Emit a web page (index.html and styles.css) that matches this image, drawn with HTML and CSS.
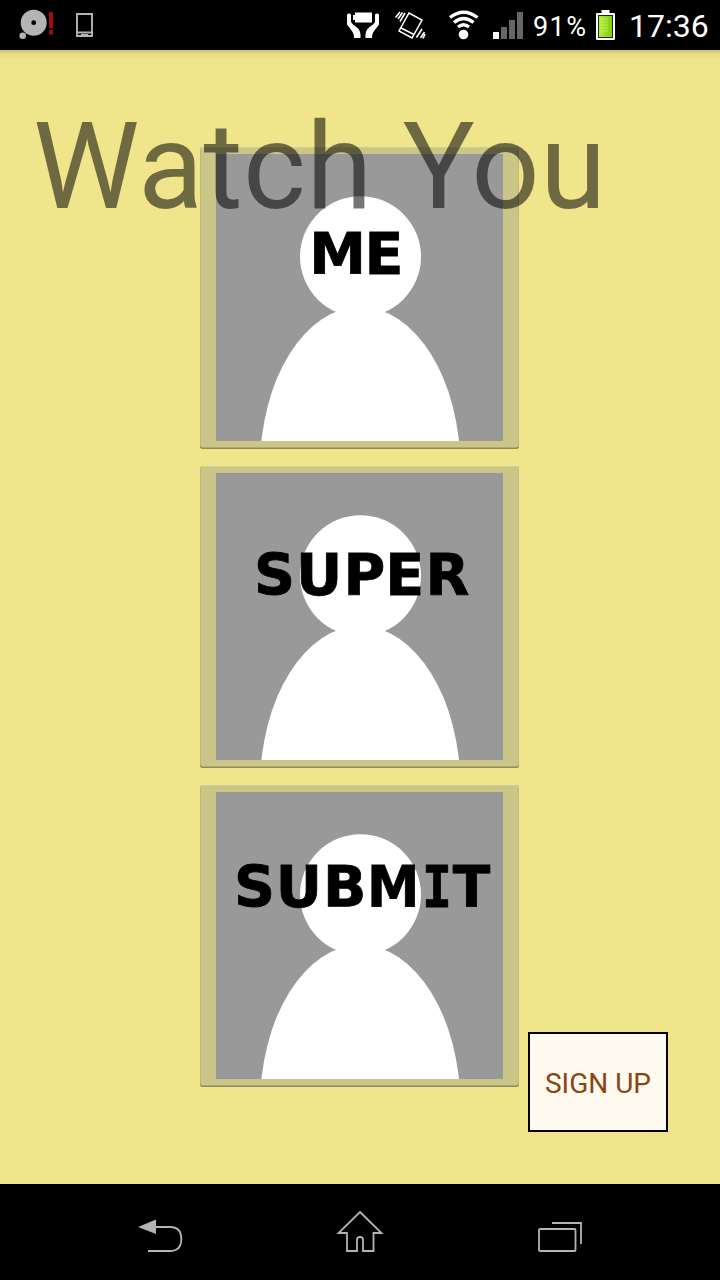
FILE: index.html
```html
<!DOCTYPE html>
<html lang="en">
<head>
<meta charset="utf-8">
<title>Watch You</title>
<link rel="stylesheet" href="styles.css">
</head>
<body>
<header class="status">
  <svg class="status-left" width="100" height="50" viewBox="0 0 100 50">
    <circle cx="33.7" cy="22.7" r="13" fill="#b4b4b4"/>
    <circle cx="33.7" cy="22.7" r="2.4" fill="#000"/>
    <circle cx="22.7" cy="35.8" r="3.3" fill="#b4b4b4"/>
    <path d="M49 12h4v16h-4zM49 30h4v4.500h-4z" fill="#a80a0a"/>
    <path d="M77 14h15v22H77zM77 32.5h15" fill="none" stroke="#b4b4b4" stroke-width="1.9"/>
    <path d="M81 34.5h7" stroke="#b4b4b4" stroke-width="1"/>
  </svg>
  <svg class="status-right" width="184" height="50" viewBox="344 0 184 50">
    <path d="M355 12.500h17v10h-17v-2.500h-2v-5h2z" fill="#fff"/>
    <path d="M347 14.500Q349 12.500 351 14.500V22Q352 24 357 27.500Q361 30.500 360.500 38H354Q354 33 351.500 30.500L347 24.500zM379 14.500Q377 12.500 375 14.500V22Q374 24 369 27.500Q365 30.500 365.500 38H372Q372 33 374.500 30.500L379 24.500z" fill="#fff"/>
    <g fill="none" stroke="#fff" stroke-width="1.500">
      <path d="M409 13L422 20L412 38L399 31zM401 28L414 34.500"/>
      <path d="M402.500 12.500L398 19M400 12L395.500 17.500M405 13L400 21.500M424.500 32L420.500 38M422 29L416.500 37.500M425 34L423 38.500" stroke-width="1.600"/>
    </g>
    <circle cx="463.500" cy="34.500" r="4.800" fill="#fff"/>
    <path d="M450 17.500Q463.500 7 477.500 17.500M454 22.500Q463.500 14.500 473.500 22.500M458 27Q463.500 22.500 469 27" fill="none" stroke="#fff" stroke-width="3.300"/>
    <path d="M493 32h6v7h-6z" fill="#fff"/>
    <path d="M501 27h6v12h-6zM509 20h6v19h-6zM517 12h6v27h-6z" fill="#666"/>
  </svg>
  <span class="percent">91%</span>
  <svg class="battery" width="19" height="31" viewBox="0 0 19 31">
    <defs><linearGradient id="charge" x2="1"><stop offset="0" stop-color="#b9f03d"/><stop offset="1" stop-color="#7cc90b"/></linearGradient></defs>
    <path d="M5.500 0h8v3h4.500q1 0 1 1v25q0 1-1 1H1q-1 0-1-1V4q0-1 1-1h4.500z" fill="#fff"/>
    <rect x="2.500" y="5.500" width="14" height="22" fill="url(#charge)" stroke="#1c2800" stroke-width="1"/>
    <path d="M4 9h8M4 12h8M4 15h8M4 18h8M4 21h8" stroke="#cdf768" stroke-width=".7"/>
  </svg>
  <time class="clock">17:36</time>
</header>

<main class="screen">
  <h1 class="title"><span class="wide">W</span>atch You</h1>
  <svg width="0" height="0" class="defs">
    <symbol id="person" viewBox="0 0 287 287">
      <rect width="287" height="287" fill="#999"/>
      <circle cx="144.500" cy="102.700" r="60.500" fill="#fff"/>
      <ellipse cx="144.200" cy="314" rx="100.200" ry="161" fill="#fff"/>
    </symbol>
  </svg>
  <div class="cards">
    <button class="card">
      <svg class="picture" viewBox="0 0 287 287"><use href="#person"/>
        <text y="120" x="93.300 148.500">ME</text>
      </svg>
    </button>
    <button class="card">
      <svg class="picture" viewBox="0 0 287 287"><use href="#person"/>
        <text y="121.500" x="38 80 127.500 169.200 209.400">SUPER</text>
      </svg>
    </button>
    <button class="card">
      <svg class="picture" viewBox="0 0 287 287"><use href="#person"/>
        <text y="114.500"><tspan x="18 59.700 107">SUB</tspan><tspan x="151" textLength="52.500" lengthAdjust="spacingAndGlyphs">M</tspan><tspan class="slab" x="206" textLength="30" lengthAdjust="spacingAndGlyphs">I</tspan><tspan x="236.700" textLength="37.500" lengthAdjust="spacingAndGlyphs">T</tspan></text>
      </svg>
    </button>
  </div>
  <button class="signup">SIGN UP</button>
</main>

<nav class="nav">
  <svg width="46" height="34" viewBox="137 1219 46 34">
    <path d="M138 1227L156 1219.500V1234z" fill="#b4b4b4"/>
    <path d="M155 1227H170Q181.300 1227 181.300 1239T170 1251H148" fill="none" stroke="#b4b4b4" stroke-width="1.800"/>
  </svg>
  <svg width="48" height="44" viewBox="336 1209 48 44">
    <path d="M360 1212L381.500 1233H373.500V1251H363V1240Q363 1237 360 1237T357 1240V1251H347V1233H338.500z" fill="none" stroke="#b4b4b4" stroke-width="1.800"/>
  </svg>
  <svg width="46" height="32" viewBox="537 1221 46 32">
    <rect x="539" y="1229" width="36.500" height="22" rx="1" fill="none" stroke="#b4b4b4" stroke-width="1.800"/>
    <path d="M552 1223H581V1244" fill="none" stroke="#b4b4b4" stroke-width="1.800"/>
  </svg>
</nav>
</body>
</html>
```
FILE: styles.css
```css
* { box-sizing: border-box; }
body {
  margin: 0;
  width: 720px;
  height: 1280px;
  display: flex;
  flex-direction: column;
  overflow: hidden;
  background: #000;
  font-family: Roboto, sans-serif;
}
svg { display: block; flex: none; }
button { font: inherit; margin: 0; padding: 0; border: 0; }

.status {
  height: 50px;
  display: flex;
  align-items: center;
  color: #fff;
  line-height: 50px;
  white-space: nowrap;
}
.status-right { margin-left: 244px; }
.percent { width: 68px; padding: 3px 0 0 5px; font-size: 27px; letter-spacing: 1.4px; }
.battery { margin-top: 1px; }
.clock { padding: 2px 0 0 14px; font-size: 32px; }

.screen {
  position: relative;
  height: 1134px;
  display: grid;
  grid-template-columns: 319px 140px;
  column-gap: 9px;
  padding: 97px 0 0 200px;
  align-items: end;
  align-content: start;
  background: linear-gradient(#c9c078, #e6dc88 4px, #f0e58b 10px);
}
.title {
  position: absolute;
  z-index: 1;
  left: 33px;
  top: 47px;
  margin: 0;
  font-size: 120px;
  font-weight: 400;
  line-height: 141px;
  letter-spacing: .3px;
  white-space: nowrap;
  color: rgba(0, 0, 0, .54);
  pointer-events: none;
}
.wide { letter-spacing: -1.5px; }
.defs { position: absolute; }
.cards { display: flex; flex-direction: column; gap: 17px; }
.card {
  height: 302px;
  padding: 7px 16px 8px;
  background: #cac688;
  border-radius: 3px;
  box-shadow: inset 0 -1.500px 0 #8e8a5c, inset 0 1px 0 #d2cd92, inset 1px 0 0 #bbb680, inset -1px 0 0 #bbb680;
}
.picture { width: 287px; height: 287px; }
.picture text {
  font: bold 57px "DejaVu Sans", sans-serif;
  fill: #000;
  stroke: #000;
  stroke-width: .8px;
}
.picture .slab { font-family: "DejaVu Sans Mono", monospace; }
.signup {
  width: 140px;
  height: 100px;
  margin-bottom: -45px;
  border: 2px solid #000;
  background: #fffaf0;
  color: #8b4513;
  font-size: 28px;
  padding-top: 2px;
}

.nav {
  height: 96px;
  display: flex;
  justify-content: space-between;
  align-items: flex-end;
  padding: 0 137px 27px;
}
```
